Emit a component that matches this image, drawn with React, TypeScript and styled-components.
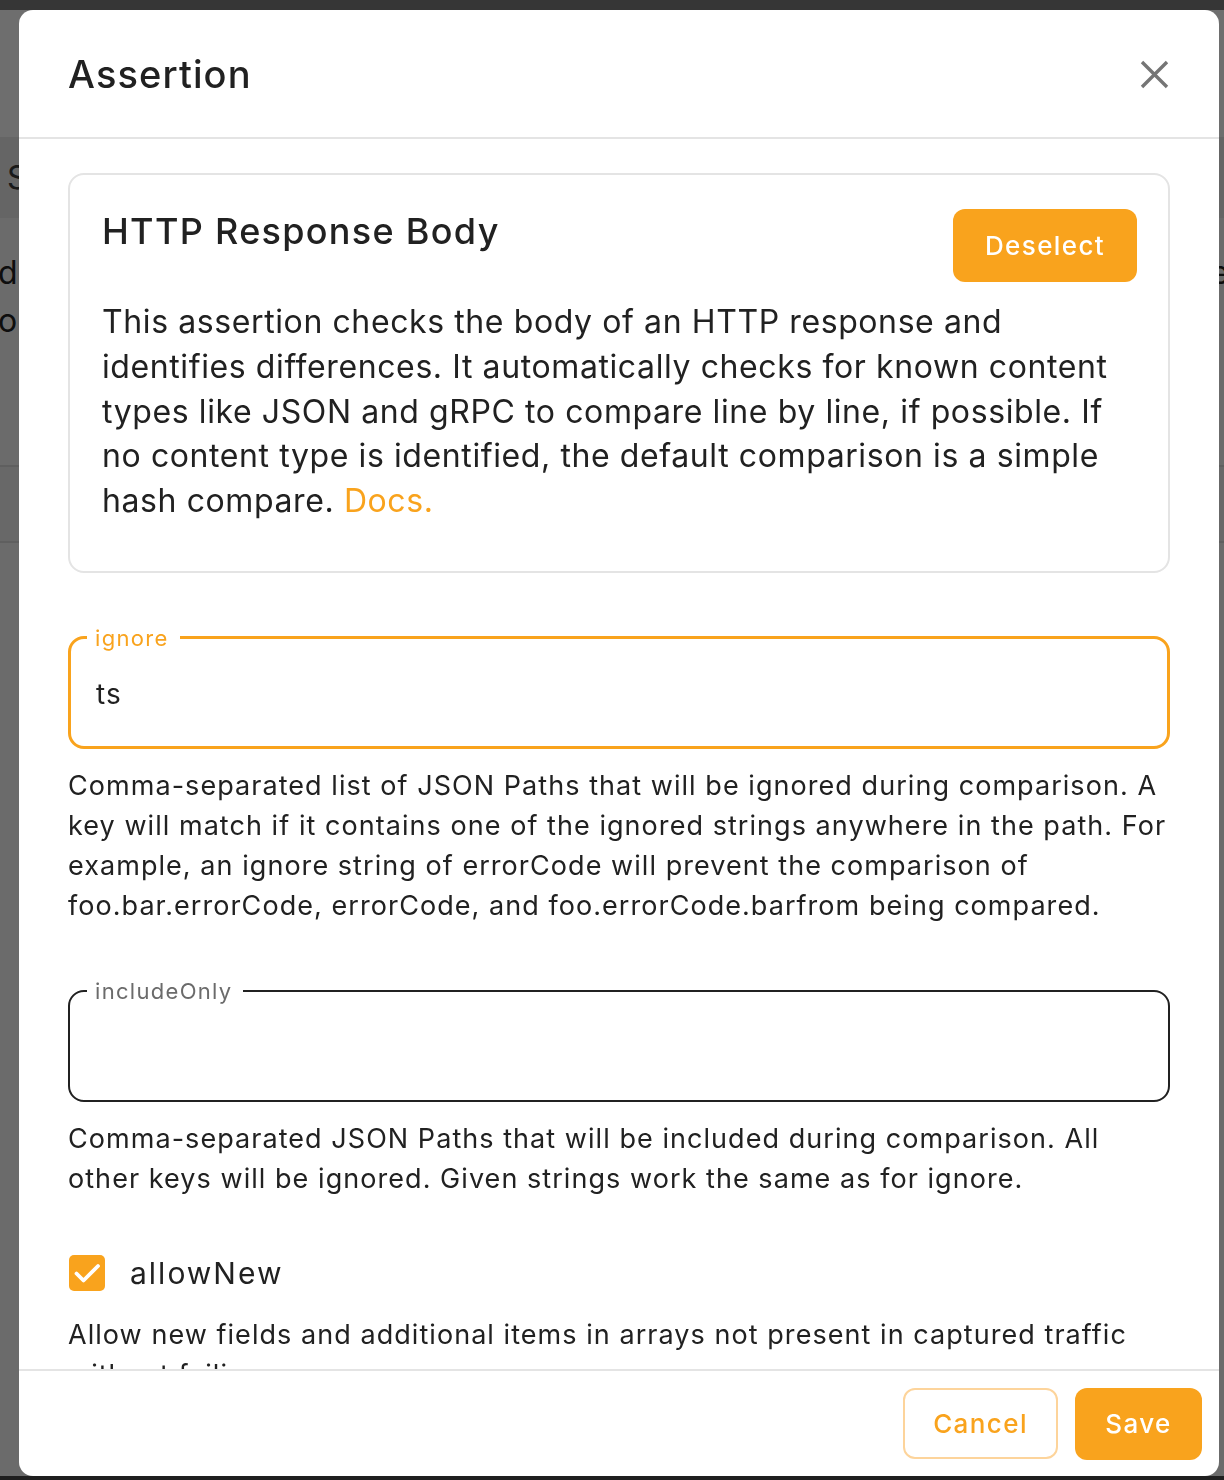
import React from "react";
import styled, { createGlobalStyle } from "styled-components";

const ORANGE = "#F9A31D";
const INK = "#212121";
const LINE = "#e4e4e4";

const GlobalStyle = createGlobalStyle`
  html, body { margin: 0; padding: 0; }
  body {
    font-family: Inter, "Noto Sans", "Liberation Sans", sans-serif;
    background: #ffffff;
    overflow: hidden;
  }
  * { box-sizing: border-box; }
`;

/* ---------- underlying page (dimmed by the overlay) ---------- */
const Page = styled.div`
  height: 1480px;
  display: flex;
  flex-direction: column;
  background: #f9f9f9;
  overflow: hidden;
`;
const TopBar = styled.div`
  height: 10px;
  background: #7e7e7e;
`;
const PageHead = styled.div`
  height: 127px;
  background: #ffffff;
`;
const TabBand = styled.div`
  height: 81px;
  background: #ebebeb;
  display: flex;
  align-items: center;
  padding-left: 7px;
  font-size: 32px;
  color: #3a3a3a;
`;
const PageText = styled.div`
  height: 247px;
  padding-top: 31px;
  display: flex;
  justify-content: space-between;
  font-size: 32px;
  line-height: 48px;
  color: #222;
`;
const PageLeft = styled.div`
  margin-left: -2px;
`;
const PageRight = styled.div`
  margin-right: -22px;
`;
const TableHead = styled.div`
  height: 78px;
  background: #f1f1f1;
  border-top: 2px solid #dcdcdc;
  border-bottom: 2px solid #dcdcdc;
`;
const PageRest = styled.div`
  flex: 1;
`;
const PageFoot = styled.div`
  height: 4px;
  background: #484848;
`;

/* ---------- overlay + modal ---------- */
const Overlay = styled.div`
  position: fixed;
  inset: 0;
  background: rgba(0, 0, 0, 0.57);
  display: flex;
  padding: 10px 5px 4px 19px;
`;
const Modal = styled.div`
  flex: 1;
  display: flex;
  flex-direction: column;
  background: #ffffff;
  border-radius: 14px;
  overflow: hidden;
`;
const Header = styled.header`
  height: 129px;
  flex: none;
  display: flex;
  align-items: center;
  justify-content: space-between;
  padding: 0 50px 0 49px;
  border-bottom: 2px solid ${LINE};
`;
const Title = styled.h1`
  margin: 0;
  font-size: 38px;
  font-weight: 500;
  letter-spacing: 1.1px;
  color: ${INK};
`;
const CloseButton = styled.button`
  width: 29px;
  height: 29px;
  padding: 0;
  border: none;
  background: transparent;
  display: flex;
  margin-top: 2px;
`;
const Body = styled.div`
  flex: 1;
  overflow: hidden;
  padding: 34px 49px 0 49px;
`;
const Card = styled.section`
  border: 2px solid ${LINE};
  border-radius: 16px;
  padding: 34px 31px 47px 32px;
`;
const CardHead = styled.div`
  display: flex;
  justify-content: space-between;
  align-items: flex-start;
`;
const CardTitle = styled.h2`
  margin: 0;
  font-size: 36px;
  line-height: 44px;
  font-weight: 500;
  letter-spacing: 1.3px;
  color: ${INK};
`;
const SolidButton = styled.button<{ $w: number; $h: number }>`
  width: ${(p) => p.$w}px;
  height: ${(p) => p.$h}px;
  border: none;
  border-radius: 12px;
  background: ${ORANGE};
  color: #ffffff;
  font-family: inherit;
  font-size: 26px;
  font-weight: 500;
  letter-spacing: 1.4px;
  padding: 0;
`;
const OutlineButton = styled.button<{ $w: number; $h: number }>`
  width: ${(p) => p.$w}px;
  height: ${(p) => p.$h}px;
  border: 2px solid #fdd49b;
  border-radius: 12px;
  background: #ffffff;
  color: ${ORANGE};
  font-family: inherit;
  font-size: 26px;
  font-weight: 500;
  letter-spacing: 1.4px;
  padding: 0;
`;
const Description = styled.p`
  margin: 18px 0 0;
  font-size: 32px;
  line-height: 44.8px;
  letter-spacing: 0.6px;
  white-space: nowrap;
  color: ${INK};
`;
const DocsLink = styled.a`
  color: ${ORANGE};
  text-decoration: none;
`;
const Field = styled.fieldset<{ $focused?: boolean; $gap: number }>`
  margin: ${(p) => p.$gap}px 0 0;
  padding: 0 ${(p) => (p.$focused ? 25 : 26)}px;
  border: ${(p) => (p.$focused ? `3px solid ${ORANGE}` : `2px solid ${INK}`)};
  border-radius: 16px;
  min-width: 0;
`;
const Legend = styled.legend<{ $focused?: boolean }>`
  margin-left: -9px;
  padding: 0 11px 0 8px;
  font-size: 22px;
  line-height: 22px;
  letter-spacing: 1.3px;
  color: ${(p) => (p.$focused ? ORANGE : "#6b6b6b")};
`;
const Input = styled.input<{ $h: number }>`
  display: block;
  width: 100%;
  height: ${(p) => p.$h}px;
  border: none;
  outline: none;
  background: transparent;
  padding: 0 0 6px;
  font-family: inherit;
  font-size: 28px;
  letter-spacing: 1px;
  color: ${INK};
`;
const Helper = styled.p<{ $gap: number }>`
  margin: ${(p) => p.$gap}px 0 0;
  font-size: 27px;
  line-height: 40px;
  letter-spacing: 1.05px;
  white-space: nowrap;
  color: ${INK};
`;
const CheckRow = styled.label`
  display: flex;
  align-items: center;
  gap: 25px;
  margin: 56px 0 0 1px;
  height: 36px;
  font-size: 30px;
  letter-spacing: 2px;
  color: ${INK};
`;
const CheckBox = styled.span`
  width: 36px;
  height: 36px;
  border-radius: 5px;
  background: ${ORANGE};
  display: flex;
  align-items: center;
  justify-content: center;
  flex: none;
`;
const Footer = styled.footer`
  height: 107px;
  flex: none;
  display: flex;
  align-items: center;
  justify-content: flex-end;
  gap: 17px;
  padding: 0 17px;
  border-top: 2px solid ${LINE};
`;

export default function App() {
  return (
    <>
      <GlobalStyle />
      <Page>
        <TopBar />
        <PageHead />
        <TabBand>S</TabBand>
        <PageText>
          <PageLeft>
            d
            <br />
            op
          </PageLeft>
          <PageRight>ex</PageRight>
        </PageText>
        <TableHead />
        <PageRest />
        <PageFoot />
      </Page>
      <Overlay>
        <Modal role="dialog" aria-label="Assertion">
          <Header>
            <Title>Assertion</Title>
            <CloseButton aria-label="Close">
              <svg width="29" height="29" viewBox="0 0 29 29">
                <path d="M2 2 L27 27 M27 2 L2 27" stroke="#757575" strokeWidth="3.4" fill="none" />
              </svg>
            </CloseButton>
          </Header>
          <Body>
            <Card>
              <CardHead>
                <CardTitle>HTTP Response Body</CardTitle>
                <SolidButton $w={184} $h={73}>Deselect</SolidButton>
              </CardHead>
              <Description>
                This assertion checks the body of an HTTP response and
                <br />
                identifies differences. It automatically checks for known content
                <br />
                types like JSON and gRPC to compare line by line, if possible. If
                <br />
                no content type is identified, the default comparison is a simple
                <br />
                hash compare. <DocsLink href="#">Docs.</DocsLink>
              </Description>
            </Card>

            <Field $focused $gap={54}>
              <Legend $focused>ignore</Legend>
              <Input $h={97} defaultValue="ts" />
            </Field>
            <Helper $gap={17}>
              Comma-separated list of JSON Paths that will be ignored during comparison. A
              <br />
              key will match if it contains one of the ignored strings anywhere in the path. For
              <br />
              example, an ignore string of errorCode will prevent the comparison of
              <br />
              foo.bar.errorCode, errorCode, and foo.errorCode.barfrom being compared.
            </Helper>

            <Field $gap={54}>
              <Legend>includeOnly</Legend>
              <Input $h={98} />
            </Field>
            <Helper $gap={17}>
              Comma-separated JSON Paths that will be included during comparison. All
              <br />
              other keys will be ignored. Given strings work the same as for ignore.
            </Helper>

            <CheckRow>
              <CheckBox>
                <svg width="30" height="30" viewBox="0 0 30 30">
                  <path d="M4.5 15.5 L11.5 22.5 L26 8" stroke="#ffffff" strokeWidth="3.8" fill="none" strokeLinecap="round" strokeLinejoin="round" />
                </svg>
              </CheckBox>
              allowNew
            </CheckRow>
            <Helper $gap={24}>
              Allow new fields and additional items in arrays not present in captured traffic
              <br />
              without failing.
            </Helper>
          </Body>
          <Footer>
            <OutlineButton $w={155} $h={71}>Cancel</OutlineButton>
            <SolidButton $w={127} $h={72}>Save</SolidButton>
          </Footer>
        </Modal>
      </Overlay>
    </>
  );
}
